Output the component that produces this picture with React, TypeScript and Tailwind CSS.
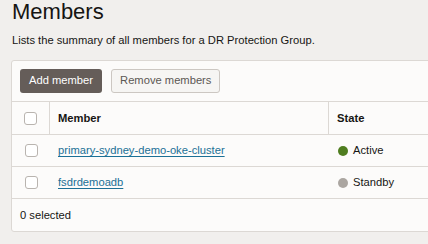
import React from "react";

const Checkbox = () => (
  <div className="w-[13px] h-[13px] rounded-[3px] border border-[#b9b4af] bg-white" />
);

export default function App() {
  return (
    <div
      className="w-[428px] h-[244px] overflow-hidden bg-[#f1efed] text-[#161513]"
      style={{ fontFamily: '"Liberation Sans", Arial, sans-serif' }}
    >
      <div className="pl-[12px] pt-[1px]">
        <h1 className="text-[22px] leading-[22px] font-normal h-[22px]">Members</h1>
        <p className="mt-[9px] text-[11.2px] leading-[16px] h-[16px] text-[#161513]">
          Lists the summary of all members for a DR Protection Group.
        </p>
      </div>
      <div className="mt-[12px] ml-[11px] w-[480px] border border-[#dcd8d4] rounded-[3px] bg-[#fcfbfa]">
        <div className="h-[41px] flex items-center gap-[9px] pl-[8px] border-b border-[#dcd8d4]">
          <button className="h-[24px] px-[9px] rounded-[3px] bg-[#655d59] text-white text-[11.2px] leading-none">
            Add member
          </button>
          <button className="h-[24px] px-[8px] rounded-[3px] bg-[#f6f5f3] border border-[#ccc7c2] text-[#5c5854] text-[11.2px] leading-none">
            Remove members
          </button>
        </div>
        <div className="h-[33px] flex border-b border-[#dcd8d4] text-[11.2px] font-bold">
          <div className="w-[38px] flex items-center justify-center border-r border-[#dcd8d4]">
            <Checkbox />
          </div>
          <div className="w-[279px] flex items-center pl-[8px] border-r border-[#dcd8d4]">Member</div>
          <div className="flex-1 flex items-center pl-[8px]">State</div>
        </div>
        {[
          { name: "primary-sydney-demo-oke-cluster", state: "Active", color: "bg-[#4f7d1f]" },
          { name: "fsdrdemoadb", state: "Standby", color: "bg-[#aba6a1]" },
        ].map((r) => (
          <div key={r.name} className="h-[32px] flex border-b border-[#dcd8d4] text-[11.2px]">
            <div className="w-[38px] flex items-center justify-center">
              <Checkbox />
            </div>
            <div className="w-[280px] flex items-center pl-[8px]">
              <a className="text-[#1b7096] underline underline-offset-[2px]">{r.name}</a>
            </div>
            <div className="flex-1 flex items-center pl-[8px] gap-[5px] text-[#161513]">
              <span className={`w-[10px] h-[10px] rounded-full ${r.color}`} />
              {r.state}
            </div>
          </div>
        ))}
        <div className="h-[32px] flex items-center pl-[8px] text-[11.2px]">0 selected</div>
      </div>
    </div>
  );
}
